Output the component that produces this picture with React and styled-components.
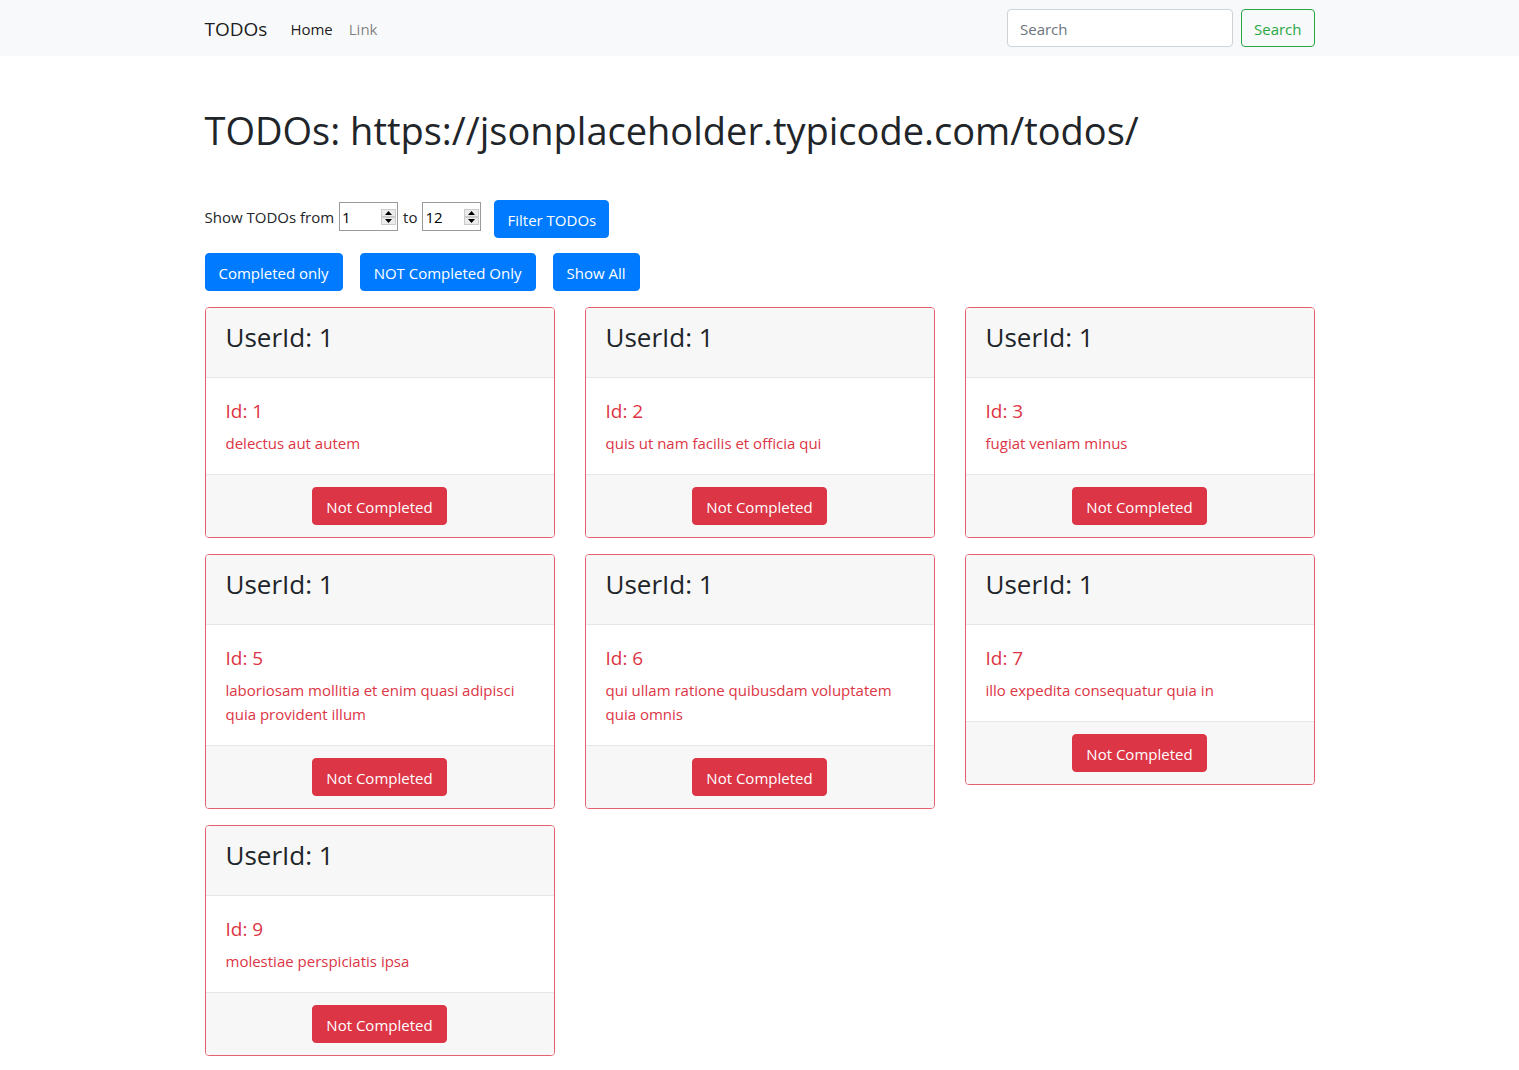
import React, { useState } from "react";
import styled, { createGlobalStyle } from "styled-components";

const GlobalStyle = createGlobalStyle`
  *, *::before, *::after { box-sizing: border-box; }
  body {
    margin: 0;
    background: #fff;
    color: #212529;
    font: 400 15px/24px "Open Sans", "Noto Sans", sans-serif;
  }
  h1, h3, h5, p { margin: 0; font-weight: 400; }
  button, input { font: inherit; }
`;

const Container = styled.div`
  width: 100%;
  max-width: 1140px;
  margin: 0 auto;
  padding: 0 15px;
`;

const Navbar = styled.nav`
  background: #f8f9fa;
  padding: 9px 0;
`;

const NavInner = styled(Container)`
  display: flex;
  align-items: center;
`;

const Brand = styled.a`
  margin-right: 15px;
  padding-top: 2px;
  color: rgba(0, 0, 0, 0.9);
  font-size: 19px;
  line-height: 30px;
  text-decoration: none;
`;

const NavList = styled.ul`
  display: flex;
  flex: 1;
  margin: 0;
  padding: 2px 0 0;
  list-style: none;
`;

const NavLink = styled.a`
  display: block;
  padding: 0 8px;
  color: rgba(0, 0, 0, ${(p) => (p.$active ? 0.9 : 0.5)});
  text-decoration: none;
`;

const SearchForm = styled.form`
  display: flex;
  gap: 8px;
`;

const SearchInput = styled.input`
  width: 226px;
  height: 38px;
  padding: 8px 12px 6px;
  border: 1px solid #ced4da;
  border-radius: 4px;
  background: #fff;
  color: #495057;
  &::placeholder { color: #6c757d; opacity: 1; }
`;

const tones = {
  primary: ["#007bff", "#007bff", "#fff"],
  danger: ["#dc3545", "#dc3545", "#fff"],
  outline: ["transparent", "#28a745", "#28a745"],
};

const Button = styled.button`
  height: 38px;
  padding: 2px ${(p) => (p.$compact ? 12 : 13)}px 0;
  border: 1px solid ${(p) => tones[p.$tone][1]};
  border-radius: 4px;
  background: ${(p) => tones[p.$tone][0]};
  color: ${(p) => tones[p.$tone][2]};
  white-space: nowrap;
  cursor: pointer;
`;

const Title = styled.h1`
  padding: 50px 0 46px;
  font-size: 38px;
  line-height: 48px;
`;

const RangeForm = styled.form`
  display: flex;
  align-items: flex-start;
  gap: 13px;
`;

const RangeFields = styled.div`
  display: flex;
  align-items: center;
  gap: 5px;
  padding-top: 2px;
`;

const NumberBox = styled.span`
  display: flex;
  align-items: center;
  width: 59px;
  height: 29px;
  padding: 0 1px 0 2px;
  border: 1px solid #9a9a9a;
  background: #fff;
`;

const NumberInput = styled.input`
  flex: 1;
  min-width: 0;
  height: 25px;
  padding: 0;
  border: 0;
  outline: 0;
  background: none;
  color: #000;
  appearance: textfield;
  &::-webkit-inner-spin-button { appearance: none; margin: 0; }
`;

const Stepper = styled.span`
  display: flex;
  flex-direction: column;
`;

const Step = styled.button`
  display: grid;
  place-items: center;
  width: 15px;
  height: 8px;
  padding: 0;
  border: 1px solid #cbcbcb;
  background: #ececec;
`;

const FilterBar = styled.div`
  display: flex;
  gap: 17px;
  padding: 15px 0 16px;
`;

const CardGrid = styled.main`
  display: grid;
  grid-template-columns: repeat(3, minmax(0, 1fr));
  gap: 16px 30px;
  align-items: start;
  padding-bottom: 16px;
`;

const Card = styled.article`
  overflow: hidden;
  border: 1px solid #e4606d;
  border-radius: 4px;
  background: #fff;
`;

const CardHeader = styled.header`
  padding: 13px 20px 23px;
  border-bottom: 1px solid #e6e6e6;
  background: #f7f7f7;
`;

const CardUser = styled.h3`
  font-size: 26px;
  line-height: 33px;
`;

const CardBody = styled.div`
  padding: 21px 20px 19px;
  color: #dc3545;
`;

const CardId = styled.h5`
  margin-bottom: 8px;
  font-size: 19px;
  line-height: 24px;
`;

const CardFooter = styled.footer`
  display: flex;
  justify-content: center;
  padding: 12px 20px;
  border-top: 1px solid #e6e6e6;
  background: #f7f7f7;
`;

const todos = [
  { id: 1, title: "delectus aut autem" },
  { id: 2, title: "quis ut nam facilis et officia qui" },
  { id: 3, title: "fugiat veniam minus" },
  { id: 5, title: "laboriosam mollitia et enim quasi adipisci quia provident illum" },
  { id: 6, title: "qui ullam ratione quibusdam voluptatem quia omnis" },
  { id: 7, title: "illo expedita consequatur quia in" },
  { id: 9, title: "molestiae perspiciatis ipsa" },
];

function NumberField({ id, initial }) {
  const [value, setValue] = useState(initial);
  return (
    <NumberBox>
      <NumberInput
        id={id}
        type="number"
        value={value}
        onChange={(e) => setValue(e.target.value)}
      />
      <Stepper>
        <Step type="button" aria-label="Increase" onClick={() => setValue(Number(value) + 1)}>
          <svg width="7" height="4" viewBox="0 0 7 4"><path d="M0 4 3.5 0 7 4z" /></svg>
        </Step>
        <Step type="button" aria-label="Decrease" onClick={() => setValue(Number(value) - 1)}>
          <svg width="7" height="4" viewBox="0 0 7 4"><path d="M0 0 3.5 4 7 0z" /></svg>
        </Step>
      </Stepper>
    </NumberBox>
  );
}

export default function App() {
  const stay = (e) => e.preventDefault();
  return (
    <>
      <GlobalStyle />
      <Navbar>
        <NavInner>
          <Brand href="#">TODOs</Brand>
          <NavList>
            <li><NavLink href="#" $active>Home</NavLink></li>
            <li><NavLink href="#">Link</NavLink></li>
          </NavList>
          <SearchForm onSubmit={stay}>
            <SearchInput type="search" placeholder="Search" aria-label="Search" />
            <Button $tone="outline" $compact type="submit">Search</Button>
          </SearchForm>
        </NavInner>
      </Navbar>
      <Container>
        <Title>TODOs: https://jsonplaceholder.typicode.com/todos/</Title>
        <RangeForm onSubmit={stay}>
          <RangeFields>
            <label htmlFor="from">Show TODOs from</label>
            <NumberField id="from" initial={1} />
            <label htmlFor="to">to</label>
            <NumberField id="to" initial={12} />
          </RangeFields>
          <Button $tone="primary" $compact type="submit">Filter TODOs</Button>
        </RangeForm>
        <FilterBar>
          <Button $tone="primary" type="button">Completed only</Button>
          <Button $tone="primary" type="button">NOT Completed Only</Button>
          <Button $tone="primary" type="button">Show All</Button>
        </FilterBar>
        <CardGrid>
          {todos.map((todo) => (
            <Card key={todo.id}>
              <CardHeader><CardUser>UserId: 1</CardUser></CardHeader>
              <CardBody>
                <CardId>Id: {todo.id}</CardId>
                <p>{todo.title}</p>
              </CardBody>
              <CardFooter>
                <Button $tone="danger" type="button">Not Completed</Button>
              </CardFooter>
            </Card>
          ))}
        </CardGrid>
      </Container>
    </>
  );
}
